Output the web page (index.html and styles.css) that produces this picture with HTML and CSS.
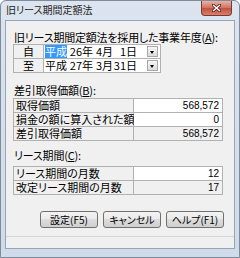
FILE: index.html
```html
<!DOCTYPE html>
<html lang="ja">
<head>
  <meta charset="UTF-8" />
  <title>旧リース期間定額法</title>
  <link rel="stylesheet" href="styles.css">
</head>
<body>
  <div class="window">
    <div class="titlebar">
      <span class="title">旧リース期間定額法</span>
      <div class="btn-close">
        <svg width="9" height="8" viewBox="0 0 9 8">
          <path d="M1 1 L8 7 M8 1 L1 7" stroke="#5a2a25" stroke-width="3" stroke-linecap="square"/>
          <path d="M1 1 L8 7 M8 1 L1 7" stroke="#ffffff" stroke-width="1.4"/>
        </svg>
      </div>
    </div>

    <div class="client">
      <div class="content">
        <!-- 事業年度 -->
        <div class="caption cap-a">旧リース期間定額法を採用した事業年度(<u>A</u>):</div>
        <div class="grid grid-date">
          <div class="cell head">自</div>
          <div class="cell date">
            <span class="era selected">平成</span>
            <span class="year">26年</span>
            <span class="month">4月</span>
            <span class="day">1日</span>
            <span class="drop"></span>
          </div>
          <div class="cell head">至</div>
          <div class="cell date">
            <span class="era">平成</span>
            <span class="year">27年</span>
            <span class="month">3月</span>
            <span class="day">31日</span>
            <span class="drop"></span>
          </div>
        </div>

        <!-- 差引取得価額 -->
        <div class="caption cap-b">差引取得価額(<u>B</u>):</div>
        <div class="grid grid-value">
          <div class="cell label">取得価額</div>
          <div class="cell num input">568,572</div>
          <div class="cell label">損金の額に算入された額</div>
          <div class="cell num input">0</div>
          <div class="cell label">差引取得価額</div>
          <div class="cell num">568,572</div>
        </div>

        <!-- リース期間 -->
        <div class="caption cap-c">リース期間(<u>C</u>):</div>
        <div class="grid grid-value">
          <div class="cell label">リース期間の月数</div>
          <div class="cell num input">12</div>
          <div class="cell label">改定リース期間の月数</div>
          <div class="cell num">17</div>
        </div>

        <div class="buttons">
          <button class="btn">設定(F5)</button>
          <button class="btn">キャンセル</button>
          <button class="btn">ヘルプ(F1)</button>
        </div>
      </div>
      <div class="status"></div>
    </div>
  </div>
</body>
</html>
```

FILE: styles.css
```css
body {
  margin: 0;
  font-family: "Noto Sans CJK JP", "Liberation Sans", sans-serif;
  font-size: 11px;
  color: #000;
  background: #ffffff;
}

/* ウィンドウ枠 */
.window {
  width: 240px;
  height: 258px;
  box-sizing: border-box;
  border: 1px solid #7d8b9b;
  border-radius: 6px 6px 0 0;
  background: linear-gradient(#dbe4ef, #cfdbe9);
  padding: 0 4px 8px 4px;
  display: flex;
  flex-direction: column;
}

.titlebar {
  height: 19px;
  display: flex;
  align-items: flex-start;
  padding-left: 1px;
}

.title {
  font-size: 10px;
  line-height: 18px;
  font-feature-settings: "palt";
  color: #1e1e1e;
}

.btn-close {
  margin-left: auto;
  margin-right: 3px;
  width: 31px;
  height: 15px;
  box-sizing: border-box;
  border: 1px solid #7a3a33;
  border-top: none;
  border-radius: 0 0 4px 4px;
  background: linear-gradient(#e9b2a6, #d0705f 50%, #c0503d 51%, #d8806c);
  display: flex;
  align-items: center;
  justify-content: center;
}

.client {
  flex-grow: 1;
  border: 1px solid #98a5b5;
  background: #f0f0f0;
  display: flex;
  flex-direction: column;
}

.content {
  flex-grow: 1;
  padding: 10px 11px 0 7px;
  display: flex;
  flex-direction: column;
}

.status {
  height: 11px;
  border-top: 1px solid #d5d5d5;
}

.caption {
  height: 12px;
  line-height: 12px;
  padding-left: 1px;
  font-feature-settings: "palt";
  letter-spacing: -0.2px;
  white-space: nowrap;
}

.caption u {
  text-decoration-thickness: 1px;
  text-underline-offset: 1px;
}

.cap-a { margin-bottom: 1px; }
.cap-b { margin-top: 11px; margin-bottom: 2px; }
.cap-c { margin-top: 8px; margin-bottom: 5px; }

/* 表 */
.grid {
  display: grid;
  gap: 1px;
  padding: 1px;
  background: #b1b1b1;
}

.grid-date {
  width: 146px;
  grid-template-columns: 29px 1fr;
  grid-auto-rows: 13px;
}

.grid-value {
  grid-template-columns: 119px 1fr;
  grid-auto-rows: 13px;
}

.cell {
  background: #f0f0f0;
  line-height: 13px;
  white-space: nowrap;
  font-feature-settings: "palt";
}

.head {
  text-align: center;
}

.label {
  padding-left: 2px;
}

.input {
  background: #ffffff;
}

.num {
  text-align: right;
  padding-right: 3px;
  font-family: "Liberation Sans", sans-serif;
  font-size: 10px;
}

.date {
  background: #ffffff;
  display: flex;
  align-items: center;
}

.date span {
  display: block;
  text-align: right;
}

.era {
  width: 22px;
  margin-left: 1px;
}

.selected {
  background: #3399ff;
  color: #ffffff;
}

.year { width: 26px; }
.month { width: 20px; }
.day { width: 24px; }

.drop {
  width: 9px;
  height: 9px;
  margin-left: auto;
  margin-right: 2px;
  border: 1px solid #a8a8a8;
  background: linear-gradient(#f6f6f6, #dcdcdc);
  position: relative;
}

.drop::after {
  content: "";
  position: absolute;
  left: 2px;
  top: 4px;
  border-left: 2.5px solid transparent;
  border-right: 2.5px solid transparent;
  border-top: 3px solid #000;
}

/* ボタン */
.buttons {
  margin-top: 16px;
  display: flex;
  justify-content: flex-end;
  gap: 5px;
  margin-right: -1px;
}

.btn {
  width: 58px;
  height: 17px;
  padding: 0;
  border: 1px solid #707070;
  border-radius: 3px;
  background: linear-gradient(#f3f3f3, #ebebeb 45%, #dddddd 50%, #cfcfcf);
  font-family: "Noto Sans CJK JP", sans-serif;
  font-size: 10px;
  line-height: 15px;
  color: #000;
  font-feature-settings: "palt";
}
```
